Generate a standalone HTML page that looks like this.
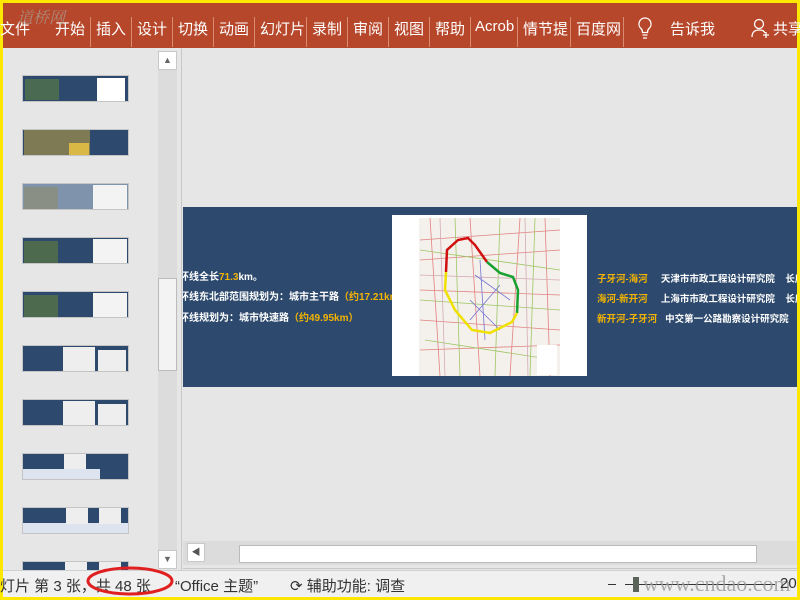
<!DOCTYPE html>
<html><head><meta charset="utf-8"><style>
*{margin:0;padding:0;box-sizing:border-box}
body{width:800px;height:600px;overflow:hidden;background:#ffe800;font-family:"Liberation Sans","Noto Sans CJK SC",sans-serif;position:relative}
.abs{position:absolute}
#rib{left:3px;top:3px;width:794px;height:45px;background:#b7472a;color:#fff;font-size:15px}
#rib span{position:absolute;top:15px;white-space:nowrap}
.sep{position:absolute;top:14px;width:1px;height:30px;background:#d98a73}
#app{left:3px;top:48px;width:794px;height:549px;background:#e6e6e6;overflow:hidden}
.th{position:absolute;left:19px;width:107px;height:27px;background:#2d4a6e;border:1px solid #c4c4c4;overflow:hidden}
#status{left:3px;top:570px;width:794px;height:27px;background:#f0f0f0;border-top:1px solid #d0d0d0;font-size:15px;color:#333}
#status span{position:absolute;top:4px;white-space:nowrap}
</style></head><body>
<div id="rib" class="abs">
<span style="left:-3px">文件</span>
<span style="left:52px">开始</span><div class="sep" style="left:87px"></div>
<span style="left:93px">插入</span><div class="sep" style="left:128px"></div>
<span style="left:134px">设计</span><div class="sep" style="left:169px"></div>
<span style="left:175px">切换</span><div class="sep" style="left:210px"></div>
<span style="left:216px">动画</span><div class="sep" style="left:251px"></div>
<span style="left:257px">幻灯片</span><div class="sep" style="left:303px"></div>
<span style="left:309px">录制</span><div class="sep" style="left:344px"></div>
<span style="left:350px">审阅</span><div class="sep" style="left:385px"></div>
<span style="left:391px">视图</span><div class="sep" style="left:426px"></div>
<span style="left:432px">帮助</span><div class="sep" style="left:467px"></div>
<span style="left:472px">Acrob</span><div class="sep" style="left:514px"></div>
<span style="left:520px">情节提</span><div class="sep" style="left:567px"></div>
<span style="left:573px">百度网</span><div class="sep" style="left:620px"></div>
<svg class="abs" style="left:634px;top:13px" width="16" height="26" viewBox="0 0 16 26"><path d="M8 2a6 6 0 0 0-4 10.5c1 1 1.5 2.5 1.5 4h5c0-1.5.5-3 1.5-4A6 6 0 0 0 8 2z M5.5 19h5 M6 22h4" fill="none" stroke="#fff" stroke-width="1.3"/></svg>
<span style="left:667px">告诉我</span>
<svg class="abs" style="left:748px;top:15px" width="18" height="22" viewBox="0 0 18 22"><circle cx="8" cy="6" r="4.5" fill="none" stroke="#fff" stroke-width="1.3"/><path d="M1 19c0-5 3-7 7-7s5 1 6 3 M12 17h6 M15 14v6" fill="none" stroke="#fff" stroke-width="1.3"/></svg>
<span style="left:770px">共享</span>
<span style="left:14px;top:2px;color:#a89a90;font-family:'Noto Serif CJK SC',serif;font-style:italic;font-size:16px;opacity:.8">道桥网</span>
</div>
<div id="app" class="abs">
 <div class="th" style="top:27px"><div class="abs" style="left:74px;top:2px;width:28px;height:23px;background:#fff"></div><div class="abs" style="left:2px;top:3px;width:34px;height:21px;background:#4b6a52"></div></div>
 <div class="th" style="top:81px"><div class="abs" style="left:1px;top:0;width:66px;height:27px;background:#7d7a54"></div><div class="abs" style="left:46px;top:13px;width:20px;height:14px;background:#d9b846"></div></div>
 <div class="th" style="top:135px;background:#7f93ad"><div class="abs" style="left:70px;top:1px;width:34px;height:25px;background:#f3f3f3"></div><div class="abs" style="left:1px;top:3px;width:34px;height:22px;background:#8a8f86"></div></div>
 <div class="th" style="top:189px"><div class="abs" style="left:70px;top:1px;width:34px;height:25px;background:#f3f3f3"></div><div class="abs" style="left:1px;top:3px;width:34px;height:22px;background:#4d6a4e"></div></div>
 <div class="th" style="top:243px"><div class="abs" style="left:70px;top:1px;width:34px;height:25px;background:#f3f3f3"></div><div class="abs" style="left:1px;top:3px;width:34px;height:22px;background:#4d6a4e"></div></div>
 <div class="th" style="top:297px"><div class="abs" style="left:40px;top:1px;width:32px;height:24px;background:#eee"></div><div class="abs" style="left:75px;top:4px;width:28px;height:21px;background:#eee"></div></div>
 <div class="th" style="top:351px"><div class="abs" style="left:40px;top:1px;width:32px;height:24px;background:#eee"></div><div class="abs" style="left:75px;top:4px;width:28px;height:21px;background:#eee"></div></div>
 <div class="th" style="top:405px"><div class="abs" style="left:0;top:15px;width:77px;height:12px;background:#dde3ef"></div><div class="abs" style="left:41px;top:0;width:22px;height:15px;background:#eee"></div></div>
 <div class="th" style="top:459px"><div class="abs" style="left:0;top:15px;width:107px;height:12px;background:#dde3ef"></div><div class="abs" style="left:43px;top:0;width:22px;height:16px;background:#eee"></div><div class="abs" style="left:76px;top:0;width:22px;height:16px;background:#eee"></div></div>
 <div class="th" style="top:513px"><div class="abs" style="left:42px;top:0;width:22px;height:16px;background:#eee"></div><div class="abs" style="left:76px;top:0;width:22px;height:16px;background:#eee"></div></div>
 <div class="abs" style="left:155px;top:3px;width:19px;height:518px;background:#dcdcdc"></div>
 <div class="abs" style="left:155px;top:3px;width:19px;height:19px;background:#fff;border:1px solid #c8c8c8;font-size:9px;color:#666;text-align:center;line-height:17px">▲</div>
 <div class="abs" style="left:155px;top:230px;width:19px;height:93px;background:#f3f3f3;border:1px solid #bbb"></div>
 <div class="abs" style="left:155px;top:502px;width:19px;height:19px;background:#fff;border:1px solid #c8c8c8;font-size:9px;color:#666;text-align:center;line-height:17px">▼</div>
 <div class="abs" style="left:178px;top:0;width:1px;height:522px;background:#c8c8c8"></div>
 <div class="abs" style="left:180px;top:159px;width:614px;height:180px;background:#2d4a6e;color:#fff;font-size:10px;font-weight:bold;overflow:hidden">
  <div class="abs" style="left:-4px;top:61px;white-space:nowrap">环线全长<span style="color:#f4b400">71.3</span>km。</div>
  <div class="abs" style="left:-4px;top:81px;white-space:nowrap">环线东北部范围规划为：城市主干路<span style="color:#f4b400">（约17.21km）</span></div>
  <div class="abs" style="left:-4px;top:102px;white-space:nowrap">环线规划为：城市快速路<span style="color:#f4b400">（约49.95km）</span></div>
  <div class="abs" style="left:414px;top:64px;white-space:nowrap;font-size:9.5px"><span style="color:#f4b400">子牙河-海河</span>&nbsp;&nbsp;&nbsp;&nbsp;&nbsp;天津市市政工程设计研究院&nbsp;&nbsp;&nbsp;&nbsp;长度约3</div>
  <div class="abs" style="left:414px;top:84px;white-space:nowrap;font-size:9.5px"><span style="color:#f4b400">海河-新开河</span>&nbsp;&nbsp;&nbsp;&nbsp;&nbsp;上海市市政工程设计研究院&nbsp;&nbsp;&nbsp;&nbsp;长度约1</div>
  <div class="abs" style="left:414px;top:104px;white-space:nowrap;font-size:9.5px"><span style="color:#f4b400">新开河-子牙河</span>&nbsp;&nbsp;&nbsp;中交第一公路勘察设计研究院&nbsp;&nbsp;&nbsp;长度</div>
  <svg class="abs" style="left:209px;top:8px" width="195" height="161" viewBox="392 215 195 161">
   <rect x="392" y="215" width="195" height="161" fill="#fff"/>
   <rect x="419" y="218" width="141" height="158" fill="#f4f1ec"/>
   <g fill="none" stroke-width="0.8" opacity="0.8">
    <path d="M420 240 L560 230 M420 260 L560 250 M420 290 L560 295 M420 320 L560 330 M420 350 L560 345 M430 218 L440 376 M470 218 L480 376 M520 218 L510 376 M545 218 L550 376" stroke="#d66"/>
    <path d="M420 250 L560 270 M420 300 L560 310 M425 340 L555 360 M455 218 L460 376 M500 218 L495 376 M535 218 L530 376" stroke="#8b4"/>
    <path d="M420 275 L560 280 M440 218 L445 376 M525 218 L528 376" stroke="#c9a"/>
    <path d="M475 275 L510 300 M470 300 L500 330 M480 260 L485 340 M500 285 L470 320" stroke="#55c"/>
   </g>
   <rect x="537" y="345" width="20" height="30" fill="#fff"/>
   <path d="M446 272 L447 250 L458 240 L468 238 L475 245 L487 262" fill="none" stroke="#d01010" stroke-width="2.5"/>
   <path d="M487 262 L500 273 L513 277 L518 290 L517 313" fill="none" stroke="#18a030" stroke-width="2.5"/>
   <path d="M446 272 L445 290 L455 310 L472 330 L490 333 L512 322 L517 313" fill="none" stroke="#f0e000" stroke-width="2.5"/>
  </svg>
 </div>
 <div class="abs" style="left:180px;top:493px;width:614px;height:24px;background:#dcdcdc"></div>
 <div class="abs" style="left:184px;top:495px;width:18px;height:19px;background:#fff;border:1px solid #c8c8c8;font-size:9px;color:#555;text-align:center;line-height:17px">◀</div>
 <div class="abs" style="left:236px;top:497px;width:518px;height:18px;background:#fff;border:1px solid #bbb"></div>
 <div class="abs" style="left:180px;top:520px;width:614px;height:1px;background:#c8c8c8"></div>
</div>
<div id="status" class="abs">
 <span style="left:-3px">灯片 第 3 张，共 48 张</span>
 <span style="left:172px">“Office 主题”</span>
 <span style="left:287px">⟳ 辅助功能: 调查</span>
 <div class="abs" style="left:605px;top:13px;width:8px;height:1px;background:#333"></div>
 <div class="abs" style="left:622px;top:13px;width:150px;height:1px;background:#333"></div>
 <div class="abs" style="left:630px;top:6px;width:6px;height:15px;background:#5a6358"></div>
 <span style="left:640px;top:0;font-family:'Liberation Serif',serif;font-size:22px;color:#999;opacity:.8">www.cndao.com</span>
 <span style="left:777px">20</span>
 <svg class="abs" style="left:82px;top:-7px" width="110" height="34"><ellipse cx="45" cy="17" rx="42" ry="13" fill="none" stroke="#e02020" stroke-width="3"/></svg>
</div>
</body></html>
